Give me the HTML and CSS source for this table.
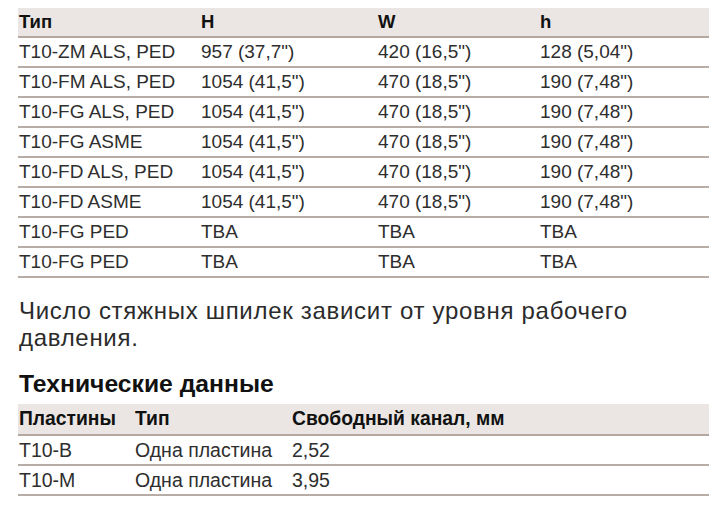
FILE: index.html
```html
<!DOCTYPE html>
<html lang="ru">
<head>
<meta charset="utf-8">
<link rel="stylesheet" href="styles.css">
</head>
<body>
<main class="page">
  <table class="spec dims">
    <colgroup>
      <col class="c1"><col class="c2"><col class="c3"><col class="c4">
    </colgroup>
    <thead>
      <tr><th>Тип</th><th>H</th><th>W</th><th>h</th></tr>
    </thead>
    <tbody>
      <tr><td>T10-ZM ALS, PED</td><td>957 (37,7")</td><td>420 (16,5")</td><td>128 (5,04")</td></tr>
      <tr><td>T10-FM ALS, PED</td><td>1054 (41,5")</td><td>470 (18,5")</td><td>190 (7,48")</td></tr>
      <tr><td>T10-FG ALS, PED</td><td>1054 (41,5")</td><td>470 (18,5")</td><td>190 (7,48")</td></tr>
      <tr><td>T10-FG ASME</td><td>1054 (41,5")</td><td>470 (18,5")</td><td>190 (7,48")</td></tr>
      <tr><td>T10-FD ALS, PED</td><td>1054 (41,5")</td><td>470 (18,5")</td><td>190 (7,48")</td></tr>
      <tr><td>T10-FD ASME</td><td>1054 (41,5")</td><td>470 (18,5")</td><td>190 (7,48")</td></tr>
      <tr><td>T10-FG PED</td><td>TBA</td><td>TBA</td><td>TBA</td></tr>
      <tr><td>T10-FG PED</td><td>TBA</td><td>TBA</td><td>TBA</td></tr>
    </tbody>
  </table>

  <p class="note">Число стяжных шпилек зависит от уровня рабочего давления.</p>

  <h2 class="title">Технические данные</h2>

  <table class="spec plates">
    <colgroup>
      <col class="p1"><col class="p2"><col class="p3">
    </colgroup>
    <thead>
      <tr><th>Пластины</th><th>Тип</th><th>Свободный канал, мм</th></tr>
    </thead>
    <tbody>
      <tr><td>T10-B</td><td>Одна пластина</td><td>2,52</td></tr>
      <tr><td>T10-M</td><td>Одна пластина</td><td>3,95</td></tr>
    </tbody>
  </table>
</main>
</body>
</html>
```

FILE: styles.css
```css
html, body {
  margin: 0;
  padding: 0;
  background: #ffffff;
}

body {
  font-family: "Liberation Sans", Arial, sans-serif;
  color: #2b2b2b;
}

.page {
  padding: 8px 15px 0 18px;
}

.spec {
  width: 691px;
  border-collapse: collapse;
  table-layout: fixed;
}

.spec th,
.spec td {
  text-align: left;
  padding: 0 0 0 1px;
  white-space: nowrap;
}

.spec th {
  background: #ebe6e3;
  color: #111111;
  font-weight: bold;
  font-size: 18.5px;
  border-bottom: 2px solid #b3a79f;
}

.spec td {
  border-bottom: 2px solid #b8ada6;
  color: #2e2e2e;
  font-size: 19px;
}

.dims th,
.dims td {
  height: 28px;
}

.c1 { width: 182px; }
.c2 { width: 177px; }
.c3 { width: 162px; }

.note {
  margin: 19px 0 0 1px;
  width: 650px;
  font-size: 24px;
  line-height: 27px;
  letter-spacing: 0.7px;
  color: #2b2b2b;
}

.title {
  margin: 20px 0 7px 1px;
  font-size: 24.7px;
  line-height: 26px;
  font-weight: bold;
  color: #111111;
}

.plates th {
  height: 30px;
  font-size: 19.3px;
}

.plates td {
  height: 28px;
  font-size: 19.5px;
}

.p1 { width: 116px; }
.p2 { width: 157px; }
```
